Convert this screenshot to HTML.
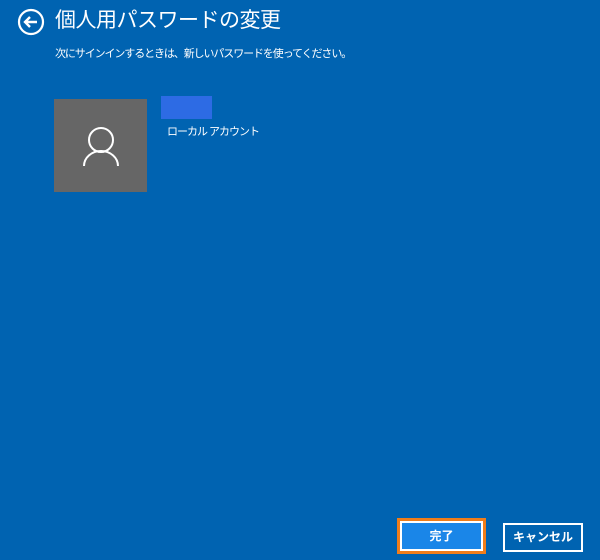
<!DOCTYPE html>
<html><head><meta charset="utf-8"><style>
body{margin:0;width:600px;height:560px;background:#0063b1;position:relative;overflow:hidden;font-family:"Liberation Sans","Noto Sans CJK JP",sans-serif;color:#fff}
.a{position:absolute;white-space:nowrap}
</style></head><body>
<svg class="a" style="left:17px;top:8px" width="28" height="28" viewBox="0 0 28 28"><circle cx="14" cy="14" r="12" fill="none" stroke="#fff" stroke-width="2.2"/><path d="M20 14H8M13 9L8 14L13 19" fill="none" stroke="#fff" stroke-width="2.4"/></svg>
<div class="a" style="left:55px;top:6px;font-size:21px;line-height:30px;letter-spacing:-0.5px">個人用パスワードの変更</div>
<div class="a" style="left:55px;top:45px;font-size:11px;line-height:18px;letter-spacing:-1.1px">次にサインインするときは、新しいパスワードを使ってください。</div>
<div class="a" style="left:54px;top:99px;width:93px;height:93px;background:#666"></div>
<svg class="a" style="left:80px;top:120px" width="42" height="50" viewBox="0 0 42 50"><circle cx="21" cy="20" r="12" fill="none" stroke="#fff" stroke-width="2"/><path d="M4 46A17 15 0 0 1 38 46" fill="none" stroke="#fff" stroke-width="2"/></svg>
<div class="a" style="left:161px;top:96px;width:51px;height:23px;background:#2d6be4"></div>
<div class="a" style="left:167px;top:123px;font-size:11px;line-height:18px;letter-spacing:-1px">ローカル アカウント</div>
<div class="a" style="left:397px;top:518px;width:89px;height:36px;background:#f07d1a"></div>
<div class="a" style="left:400px;top:521px;width:79px;height:26px;background:#1a86e8;border:2px solid #fff;text-align:center;font-size:12px;font-weight:bold;line-height:26px">完了</div>
<div class="a" style="left:503px;top:523px;width:76px;height:25px;border:2px solid #fff;text-align:center;font-size:12px;font-weight:bold;line-height:25px">キャンセル</div>
</body></html>
